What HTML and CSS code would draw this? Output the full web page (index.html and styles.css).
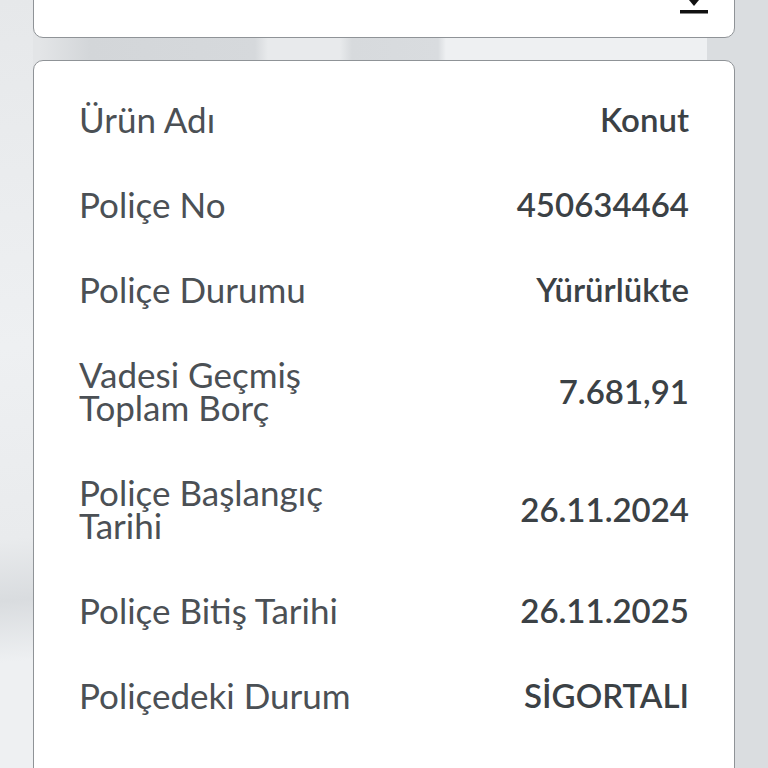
FILE: index.html
```html
<!DOCTYPE html>
<html lang="tr">
<head>
  <meta charset="UTF-8" />
  <meta name="viewport" content="width=device-width, initial-scale=1" />
  <title>Poliçe Detayı</title>
  <link rel="stylesheet" href="styles.css">
</head>
<body>

  <div class="page">
    <!-- üst kart (indirme) -->
    <div class="card card-top">
      <button class="btn-download" aria-label="İndir">
        <svg width="28" height="14" viewBox="0 0 28 14">
          <rect x="12.5" y="-6" width="3" height="8" fill="#111" />
          <path d="M9 0 L19 0 L14 6 Z" fill="#111" />
          <rect x="0" y="10" width="28" height="3.5" fill="#111" />
        </svg>
      </button>
    </div>

    <!-- poliçe bilgileri -->
    <div class="card card-info">
      <div class="row">
        <div class="label">Ürün Adı</div>
        <div class="value">Konut</div>
      </div>
      <div class="row">
        <div class="label">Poliçe No</div>
        <div class="value">450634464</div>
      </div>
      <div class="row">
        <div class="label">Poliçe Durumu</div>
        <div class="value">Yürürlükte</div>
      </div>
      <div class="row">
        <div class="label">Vadesi Geçmiş Toplam Borç</div>
        <div class="value">7.681,91</div>
      </div>
      <div class="row">
        <div class="label">Poliçe Başlangıç Tarihi</div>
        <div class="value">26.11.2024</div>
      </div>
      <div class="row">
        <div class="label">Poliçe Bitiş Tarihi</div>
        <div class="value">26.11.2025</div>
      </div>
      <div class="row">
        <div class="label">Poliçedeki Durum</div>
        <div class="value">SİGORTALI</div>
      </div>
      <div class="row row-faded">
        <div class="label">Sigortalı</div>
        <div class="value">-</div>
      </div>
    </div>
  </div>

</body>
</html>
```

FILE: styles.css
```css
body {
  font-family: Lato, "Liberation Sans", sans-serif;
  margin: 0;
  height: 768px;
  overflow: hidden;
  background:
    linear-gradient(175deg, #e6e8ea 0%, #eef0f2 45%, #e9ebed 70%, #d9dcdf 78%, #eef0f2 86%) left top / 33px 100% no-repeat,
    linear-gradient(#dadde0, #dadde0) right top / 61px 100% no-repeat,
    linear-gradient(to right, #e3e5e7 0, #e3e5e7 40px, #d3d6d9 90px, #d6d9dc 255px, #e8eaec 268px, #e8eaec 340px, #d7dadd 352px, #d9dcdf 438px, #eef0f2 446px, #eef0f2 100%);
  color: #4b5055;
}

.page {
  padding: 0 33px;
}

.card {
  background: #fff;
  border: 1px solid #8f9397;
  border-radius: 10px;
}

.card-top {
  height: 80px;
  margin-top: -42px;
  margin-bottom: 22px;
  display: flex;
  align-items: flex-end;
  justify-content: flex-end;
  padding: 0 26px 23px 0;
  box-sizing: border-box;
}

.btn-download {
  background: none;
  border: none;
  padding: 0;
  line-height: 0;
}

.card-info {
  padding: 16px 45px 0 45px;
}

.row {
  display: flex;
  justify-content: space-between;
  align-items: center;
  padding: 26px 0;
}

.label {
  width: 300px;
  font-size: 35px;
  line-height: 33px;
  color: #4b5055;
}

.value {
  font-size: 33px;
  line-height: 33px;
  font-weight: 600;
  color: #3b4145;
  text-align: right;
}

.row-faded {
  opacity: 0.35;
}
```
